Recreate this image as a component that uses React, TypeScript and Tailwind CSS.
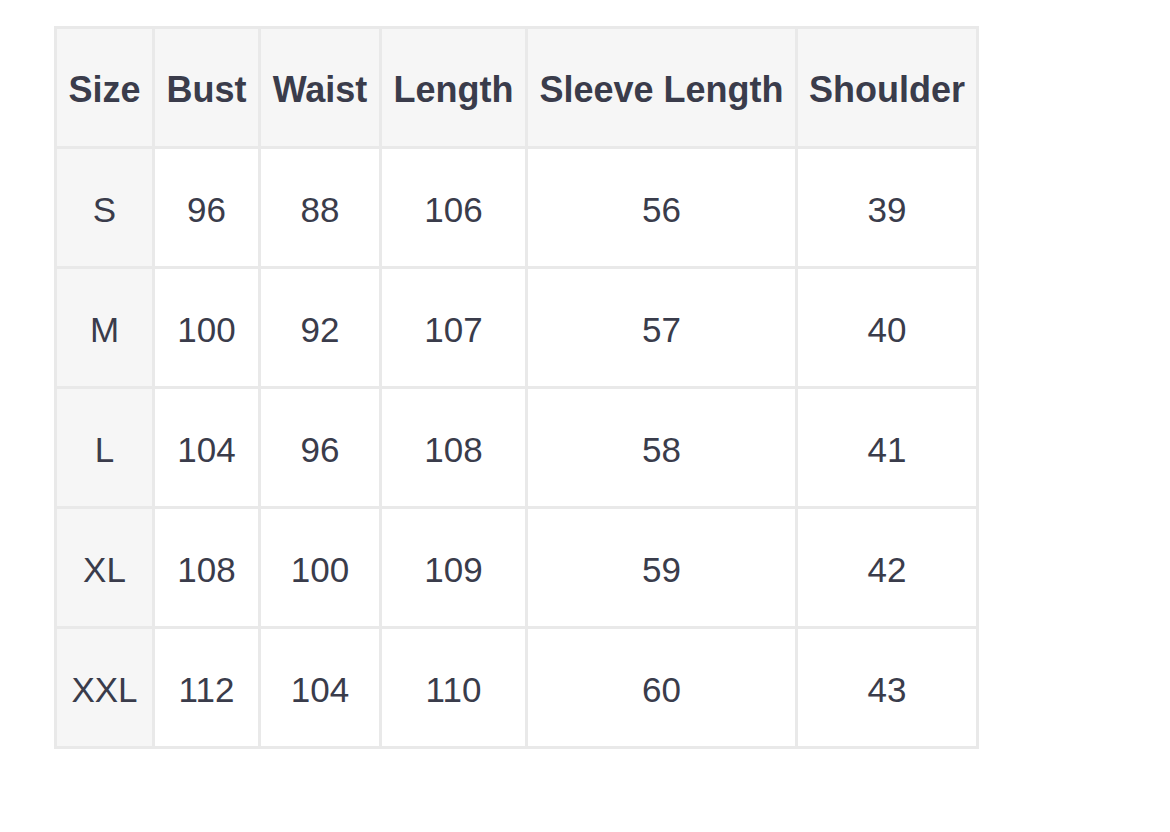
import React from "react";

const headers = ["Size", "Bust", "Waist", "Length", "Sleeve Length", "Shoulder"];
const rows = [
  ["S", "96", "88", "106", "56", "39"],
  ["M", "100", "92", "107", "57", "40"],
  ["L", "104", "96", "108", "58", "41"],
  ["XL", "108", "100", "109", "59", "42"],
  ["XXL", "112", "104", "110", "60", "43"],
];

export default function App() {
  return (
    <div
      className="w-[1170px] h-[832px] bg-white pl-[54px] pt-[26px] text-[#3a3c4b]"
      style={{ fontFamily: '"Liberation Sans", Arial, sans-serif' }}
    >
      <div className="grid w-max grid-cols-[95px_103px_118px_143px_267px_178px] auto-rows-[117px] gap-[3px] bg-[#e9e9e9] p-[3px]">
        {headers.map((h) => (
          <div
            key={h}
            className="flex items-center justify-center bg-[#f6f6f6] pt-[5px] text-[36px] font-bold whitespace-nowrap"
          >
            {h}
          </div>
        ))}
        {rows.map((r) =>
          r.map((c, i) => (
            <div
              key={r[0] + i}
              className={
                "flex items-center justify-center pt-[5px] text-[35px] " +
                (i === 0 ? "bg-[#f6f6f6]" : "bg-white")
              }
            >
              {c}
            </div>
          ))
        )}
      </div>
    </div>
  );
}
